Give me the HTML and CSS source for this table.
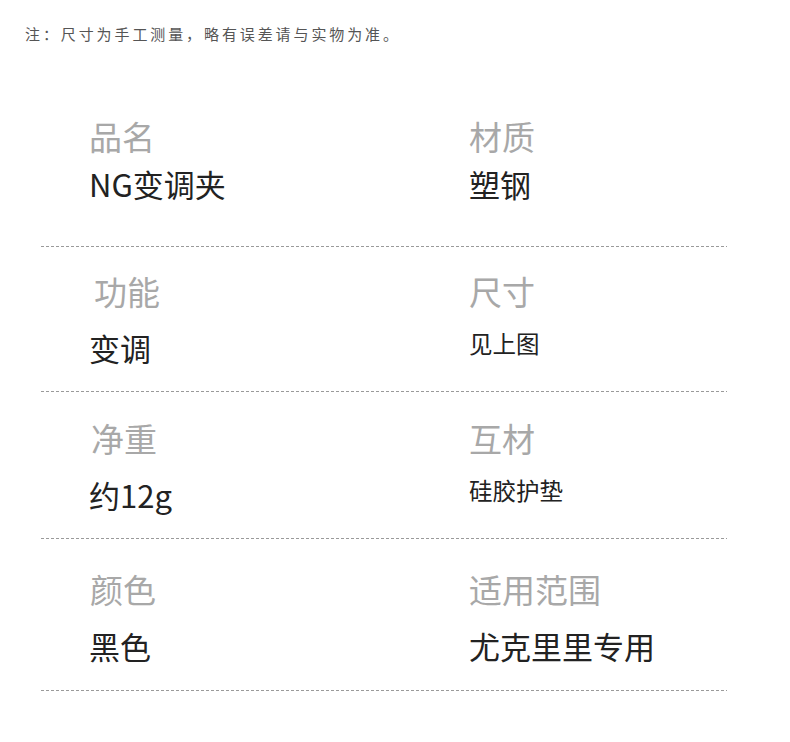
FILE: index.html
```html
<!DOCTYPE html>
<html lang="zh-CN">
<head>
<meta charset="utf-8">
<title>产品参数</title>
<link rel="stylesheet" href="styles.css">
</head>
<body>
<p class="note">注：尺寸为手工测量，略有误差请与实物为准。</p>
<div class="specs">
  <div class="row row-1">
    <div class="cell"><div class="label">品名</div><div class="value">NG变调夹</div></div>
    <div class="cell"><div class="label">材质</div><div class="value">塑钢</div></div>
  </div>
  <div class="row row-2">
    <div class="cell"><div class="label shift-5">功能</div><div class="value">变调</div></div>
    <div class="cell"><div class="label">尺寸</div><div class="value small">见上图</div></div>
  </div>
  <div class="row row-3">
    <div class="cell"><div class="label shift-2">净重</div><div class="value">约12g</div></div>
    <div class="cell"><div class="label">互材</div><div class="value small">硅胶护垫</div></div>
  </div>
  <div class="row row-4">
    <div class="cell"><div class="label shift-1">颜色</div><div class="value">黑色</div></div>
    <div class="cell"><div class="label">适用范围</div><div class="value">尤克里里专用</div></div>
  </div>
</div>
</body>
</html>
```

FILE: styles.css
```css
html, body {
  margin: 0;
  padding: 0;
  background: #ffffff;
}
body {
  font-family: "Noto Sans CJK SC", "Noto Sans", sans-serif;
  width: 790px;
  height: 742px;
  overflow: hidden;
}
.note {
  margin: 0;
  padding: 24px 0 0 25px;
  font-size: 15px;
  line-height: 20px;
  letter-spacing: 2.9px;
  color: #555555;
}
.specs {
  margin-left: 41px;
  width: 686px;
}
.row {
  display: grid;
  grid-template-columns: 428px 1fr;
  background-image: repeating-linear-gradient(to right, #9a9a9a 0 3px, transparent 3px 5px);
  background-size: 100% 1px;
  background-position: left bottom;
  background-repeat: no-repeat;
}
.cell {
  display: flex;
  flex-direction: column;
}
.cell:first-child {
  padding-left: 48px;
}
.label {
  font-size: 33px;
  line-height: 40px;
  color: #a8a8a8;
}
.value {
  font-size: 31px;
  line-height: 40px;
  color: #222222;
}
.value.small {
  font-size: 23.5px;
  line-height: 30px;
}
.shift-5 { padding-left: 5px; }
.shift-2 { padding-left: 2px; }
.shift-1 { padding-left: 1px; }

.row-1 { margin-top: 72px; padding-bottom: 43px; }
.row-1 .label { margin-bottom: 8px; }
.row-2 { padding-top: 24px; padding-bottom: 24px; }
.row-2 .label { margin-bottom: 17px; }
.row-3 { padding-top: 26px; padding-bottom: 24px; }
.row-3 .label { margin-bottom: 17px; }
.row-4 { padding-top: 30px; padding-bottom: 25px; }
.row-4 .label { margin-bottom: 17px; }
```
